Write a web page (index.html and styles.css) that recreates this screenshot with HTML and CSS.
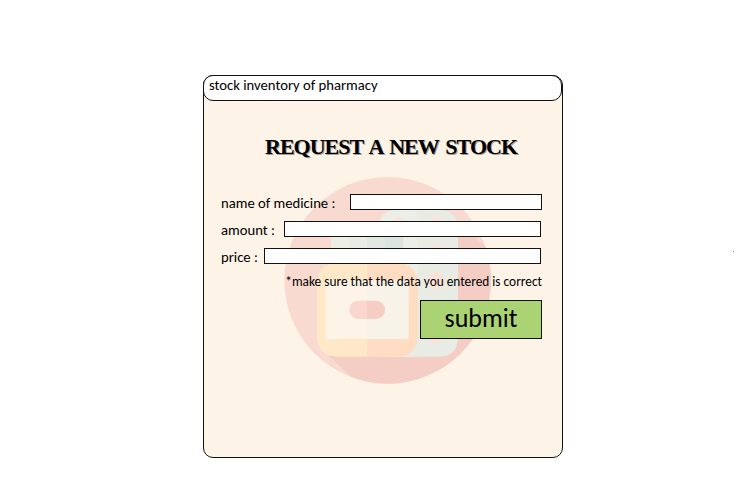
FILE: index.html
```html
<!DOCTYPE html>
<html lang="en">
<head>
<meta charset="utf-8">
<title>stock inventory of pharmacy</title>
<link rel="stylesheet" href="styles.css">
</head>
<body>
<main class="card">
  <svg class="emblem" viewBox="0 0 675 660" aria-hidden="true">
    <defs><clipPath id="disc"><circle cx="338" cy="331" r="310"/></clipPath></defs>
    <circle cx="338" cy="331" r="310" fill="#f9dad1"/>
    <g clip-path="url(#disc)">
      <path d="M530 138L675 270V660H268L150 545L300 500Z" fill="#f4cdc4"/>
    </g>
    <path d="M428 120H370Q310 120 310 180V560H428Z" fill="#ecefe7"/>
    <path d="M428 120H489Q549 120 549 180V500Q549 560 489 560H375V500H428Z" fill="#e8ece4"/>
    <g fill="#fbe3da">
      <circle cx="375" cy="169" r="27"/><circle cx="482" cy="169" r="27"/>
      <circle cx="482" cy="251" r="27"/><circle cx="482" cy="332" r="27"/>
      <circle cx="482" cy="413" r="27"/><circle cx="482" cy="493" r="27"/>
    </g>
    <path d="M168 190H223V290H168Z" fill="#edefe5"/>
    <path d="M223 190H276V290H223Z" fill="#e8ece4"/>
    <path d="M276 190H330V290H276Z" fill="#e3e7e2"/>
    <path d="M330 190H385V290H330Z" fill="#dde5e1"/>
    <path d="M276 280H190Q126 280 126 344V496Q126 560 190 560H276Z" fill="#fee8c8"/>
    <path d="M276 280H364Q428 280 428 344V496Q428 560 364 560H276Z" fill="#ffdcc2"/>
    <path d="M152 331H276V507H152Z" fill="#fef3e7"/>
    <path d="M276 331H401V507H276Z" fill="#f8f3e8"/>
    <path d="M276 392H250a27 27 0 0 0 0 55H276Z" fill="#f9d7cc"/>
    <path d="M276 392H303a27 27 0 0 1 0 55H276Z" fill="#f6cdc3"/>
  </svg>
  <header class="titlebar"><span class="caption">stock inventory of pharmacy</span></header>
  <h1 class="heading">REQUEST A NEW STOCK</h1>
  <form class="form">
    <div class="row"><label class="label name" for="name">name of medicine :</label><input class="field" id="name"></div>
    <div class="row"><label class="label amount" for="amount">amount :</label><input class="field short" id="amount"></div>
    <div class="row"><label class="label price" for="price">price :</label><input class="field short" id="price"></div>
    <p class="note">*make sure that the data you entered is correct</p>
    <button class="submit" type="button">submit</button>
  </form>
</main>
<i class="speck"></i>
</body>
</html>
```
FILE: styles.css
```css
* { box-sizing: border-box; }
body {
  margin: 0;
  height: 504px;
  overflow: hidden;
  background: #fff;
  color: #000;
  font: 14.67px/18px Carlito, "Noto Sans", sans-serif;
}
.card {
  position: relative;
  width: 360px;
  height: 383px;
  margin: 75px 0 0 203px;
  border: 1px solid #111;
  border-radius: 10px;
  background: #fef3e7;
}
.emblem {
  position: absolute;
  left: 71px;
  top: 94px;
  width: 225px;
  height: 220px;
}
.titlebar {
  width: 359px;
  height: 26px;
  margin: -1px 0 0 -1px;
  padding: 0 5px;
  border: 1px solid #111;
  border-radius: 10px;
  background: #fff;
}
.heading {
  position: relative;
  margin: 31px 0 0 61px;
  font: bold 22px/30px "Liberation Serif", serif;
  letter-spacing: -1px;
  word-spacing: 2.5px;
  white-space: nowrap;
  text-shadow: 1px 1px 0 #a79d94;
}
.form {
  position: relative;
  display: flex;
  flex-direction: column;
  margin: 32px 20px 0 17px;
}
.row {
  display: flex;
  height: 27px;
}
.label {
  flex: none;
  white-space: nowrap;
}
.name { width: 129px; }
.amount { width: 63px; }
.price { width: 43px; }
.field {
  flex: 1;
  min-width: 0;
  height: 16px;
  padding: 0 4px;
  border: 1px solid #111;
  border-radius: 0;
  background: #fff;
  font: inherit;
}
.short { margin-right: 1px; }
.note {
  align-self: flex-end;
  margin: -2px 0 0;
  font-size: 13.33px;
  white-space: nowrap;
}
.submit {
  align-self: flex-end;
  width: 122px;
  height: 39px;
  margin-top: 9px;
  padding: 0 0 3px;
  border: 1px solid #111;
  border-radius: 0;
  background: #acd373;
  color: #000;
  font: 26px/30px Carlito, "Noto Sans", sans-serif;
}
.speck {
  position: absolute;
  left: 733px;
  top: 251px;
  width: 1px;
  height: 1px;
  background: #888;
}
```
